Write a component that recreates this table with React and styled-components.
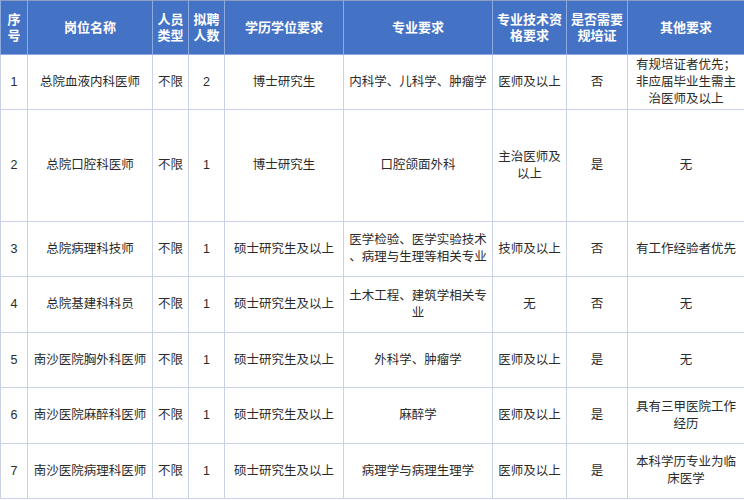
import React from "react";
import styled, { createGlobalStyle } from "styled-components";

const GlobalStyle = createGlobalStyle`
  html, body {
    margin: 0;
    padding: 0;
    background: #ffffff;
  }
  body {
    font-family: "Liberation Sans", "Noto Sans CJK SC", sans-serif;
  }
`;

const Table = styled.table`
  width: 744px;
  border-collapse: collapse;
  table-layout: fixed;
  border: 1px solid #8d9cc2;
  font-family: "Liberation Sans", "Noto Sans CJK SC", sans-serif;
`;

const HeadCell = styled.th`
  height: 53px;
  padding: 0 4px;
  background: #4472c4;
  color: #ffffff;
  font-size: 13px;
  font-weight: 700;
  line-height: 16px;
  text-align: center;
  vertical-align: middle;
  border: 1px solid #8eabe0;
  border-top: none;
`;

const Row = styled.tr`
  height: ${(p) => p.$h}px;
`;

const Cell = styled.td`
  padding: 0 4px;
  font-size: 12.5px;
  line-height: 17px;
  color: #2b2b2b;
  text-align: center;
  vertical-align: middle;
  white-space: pre-line;
  border: 1px solid #c9d2e6;
`;

const columns = [
  { w: 27, title: "序号" },
  { w: 125, title: "岗位名称" },
  { w: 36, title: "人员类型" },
  { w: 36, title: "拟聘人数" },
  { w: 119, title: "学历学位要求" },
  { w: 149, title: "专业要求" },
  { w: 74, title: "专业技术资格要求" },
  { w: 61, title: "是否需要规培证" },
  { w: 117, title: "其他要求" },
];

const rows = [
  {
    h: 55,
    cells: ["1", "总院血液内科医师", "不限", "2", "博士研究生", "内科学、儿科学、肿瘤学", "医师及以上", "否", "有规培证者优先；\n非应届毕业生需主\n治医师及以上"],
  },
  {
    h: 112,
    cells: ["2", "总院口腔科医师", "不限", "1", "博士研究生", "口腔颌面外科", "主治医师及\n以上", "是", "无"],
  },
  {
    h: 55,
    cells: ["3", "总院病理科技师", "不限", "1", "硕士研究生及以上", "医学检验、医学实验技术\n、病理与生理等相关专业", "技师及以上", "否", "有工作经验者优先"],
  },
  {
    h: 56,
    cells: ["4", "总院基建科科员", "不限", "1", "硕士研究生及以上", "土木工程、建筑学相关专\n业", "无", "否", "无"],
  },
  {
    h: 55,
    cells: ["5", "南沙医院胸外科医师", "不限", "1", "硕士研究生及以上", "外科学、肿瘤学", "医师及以上", "是", "无"],
  },
  {
    h: 56,
    cells: ["6", "南沙医院麻醉科医师", "不限", "1", "硕士研究生及以上", "麻醉学", "医师及以上", "是", "具有三甲医院工作\n经历"],
  },
  {
    h: 55,
    cells: ["7", "南沙医院病理科医师", "不限", "1", "硕士研究生及以上", "病理学与病理生理学", "医师及以上", "是", "本科学历专业为临\n床医学"],
  },
];

export default function App() {
  return (
    <>
      <GlobalStyle />
      <Table>
        <colgroup>
          {columns.map((c) => (
            <col key={c.title} style={{ width: c.w }} />
          ))}
        </colgroup>
        <thead>
          <tr>
            {columns.map((c) => (
              <HeadCell key={c.title}>{c.title}</HeadCell>
            ))}
          </tr>
        </thead>
        <tbody>
          {rows.map((r) => (
            <Row key={r.cells[0]} $h={r.h}>
              {r.cells.map((text, i) => (
                <Cell key={i}>{text}</Cell>
              ))}
            </Row>
          ))}
        </tbody>
      </Table>
    </>
  );
}
